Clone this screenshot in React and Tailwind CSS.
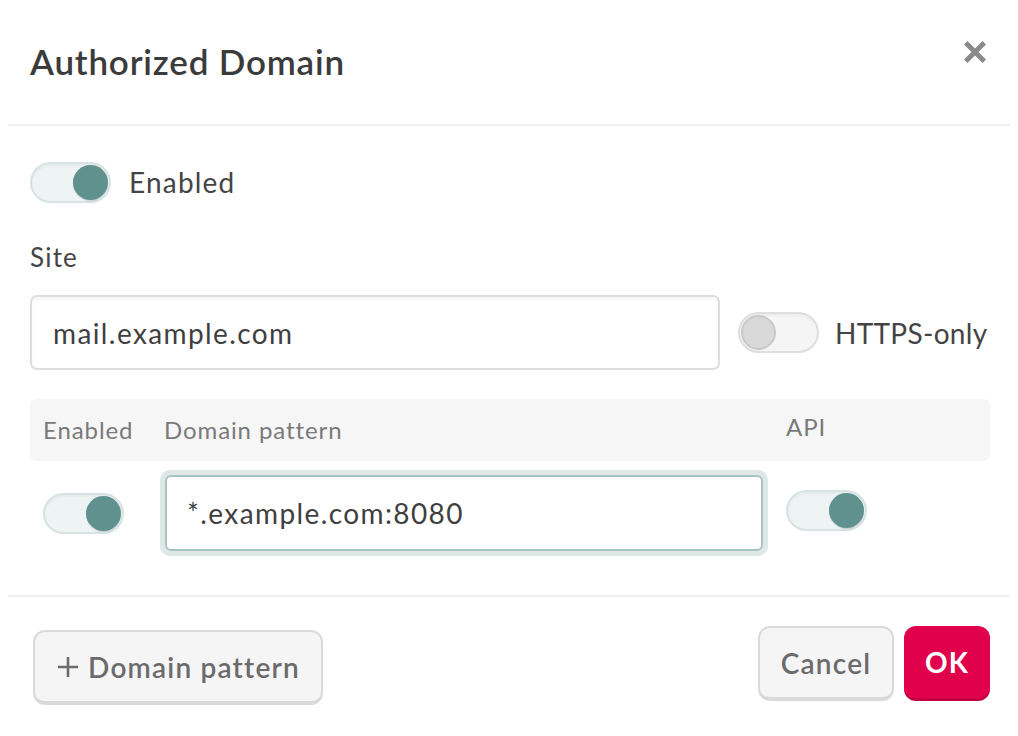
import { useState } from "react";

function Toggle({ on, onClick }) {
    return (
        <button
            type="button"
            onClick={onClick}
            className={
                "relative flex items-center w-[81px] h-[41px] rounded-full border-2 shrink-0 shadow-[inset_0_2px_2px_rgba(0,0,0,0.04)] " +
                (on ? "bg-[#eef3f3] border-[#d6e3e2] justify-end" : "bg-[#f5f5f5] border-[#dedede] justify-start")
            }
        >
            <span
                className={
                    "block w-[35px] h-[35px] rounded-full mx-[1px] " +
                    (on ? "bg-[#5f918f] shadow-[0_1px_1px_rgba(0,0,0,0.15)]" : "bg-[#d9d9d9] border-2 border-[#c9c9c9]")
                }
            />
        </button>
    );
}

function App() {
    const [enabled, setEnabled] = useState(true);
    const [httpsOnly, setHttpsOnly] = useState(false);
    const [rowEnabled, setRowEnabled] = useState(true);
    const [api, setApi] = useState(true);

    return (
        <div className="w-[1018px] h-[736px] bg-white text-[#404040] overflow-hidden tracking-[1.2px]" style={{ fontFamily: "Lato, 'Noto Sans', sans-serif" }}>
            {/* header */}
            <div className="flex items-center justify-between h-[124px] pl-[30px] pr-[32px] pb-[2px]">
                <h2 className="text-[35px] font-semibold text-[#3b3b3b] tracking-[0.8px]">Authorized Domain</h2>
                <button type="button" className="text-[#8a8a8a] -mt-[18px]">
                    <svg width="22" height="22" viewBox="0 0 22 22">
                        <path d="M3.5 3.5 L18.5 18.5 M18.5 3.5 L3.5 18.5" stroke="currentColor" strokeWidth="5" strokeLinecap="square" />
                    </svg>
                </button>
            </div>
            <div className="mx-[8px] h-[2px] bg-[#efefef]" />

            {/* body */}
            <div className="px-[30px] pt-[35px]">
                <div className="flex items-center gap-[18px]">
                    <Toggle on={enabled} onClick={() => setEnabled(!enabled)} />
                    <span className="text-[28px] text-[#444]">Enabled</span>
                </div>

                <div className="mt-[35px] text-[26px] text-[#444]">Site</div>

                <div className="mt-[18px] flex items-center">
                    <input
                        defaultValue="mail.example.com"
                        className="w-[690px] shrink-0 h-[75px] rounded-[7px] border-2 border-[#dddddd] px-[21px] text-[28px] tracking-[1.4px] text-[#3f3f3f] outline-none shadow-[inset_0_3px_2px_rgba(0,0,0,0.03)]"
                    />
                    <div className="ml-[18px]">
                        <Toggle on={httpsOnly} onClick={() => setHttpsOnly(!httpsOnly)} />
                    </div>
                    <span className="ml-[16px] whitespace-nowrap text-[28px] text-[#444] tracking-[0.3px]">HTTPS-only</span>
                </div>

                {/* table */}
                <div className="mt-[29px] mr-[-2px] grid grid-cols-[130px_620px_1fr] items-center h-[62px] bg-[#f6f6f6] rounded-[6px] text-[24px] tracking-[0.9px] text-[#7a7a7a]">
                    <span className="pl-[13px]">Enabled</span>
                    <span className="pl-[4px]">Domain pattern</span>
                    <span className="pl-[6px] -mt-[6px]">API</span>
                </div>
                <div className="grid grid-cols-[130px_620px_1fr] items-center mt-[9px]">
                    <div className="pl-[13px]">
                        <Toggle on={rowEnabled} onClick={() => setRowEnabled(!rowEnabled)} />
                    </div>
                    <div className="pr-[12px]">
                        <div className="rounded-[10px] bg-[#dde8e7] p-[5px]">
                            <input
                                defaultValue="*.example.com:8080"
                                className="w-full h-[76px] rounded-[6px] border-2 border-[#a8c5c3] bg-white px-[20px] text-[28px] tracking-[1.4px] text-[#3f3f3f] outline-none"
                            />
                        </div>
                    </div>
                    <div className="pl-[6px] -mt-[6px]">
                        <Toggle on={api} onClick={() => setApi(!api)} />
                    </div>
                </div>
            </div>

            <div className="mx-[8px] mt-[39px] h-[2px] bg-[#efefef]" />

            {/* footer */}
            <div className="flex items-center justify-between pl-[33px] pr-[28px] pt-[33px]">
                <button
                    type="button"
                    className="flex items-center gap-[8px] h-[75px] w-[290px] justify-center rounded-[12px] bg-[#f5f5f5] border-2 border-[#dadada] border-b-[4px] text-[28px] font-semibold text-[#6b6b6b]"
                >
                    <svg width="24" height="24" viewBox="0 0 24 24">
                        <path d="M12 2 V22 M2 12 H22" stroke="currentColor" strokeWidth="2.6" />
                    </svg>
                    Domain pattern
                </button>
                <div className="flex items-center gap-[10px] -mt-[8px]">
                    <button
                        type="button"
                        className="h-[75px] w-[136px] rounded-[12px] bg-[#f5f5f5] border-2 border-[#dadada] border-b-[4px] text-[28px] font-semibold text-[#6b6b6b]"
                    >
                        Cancel
                    </button>
                    <button
                        type="button"
                        className="h-[75px] w-[86px] rounded-[12px] bg-[#e0004b] border-b-[3px] border-[#c30041] text-[28px] font-bold text-white"
                    >
                        OK
                    </button>
                </div>
            </div>
        </div>
    );
}

export default App
